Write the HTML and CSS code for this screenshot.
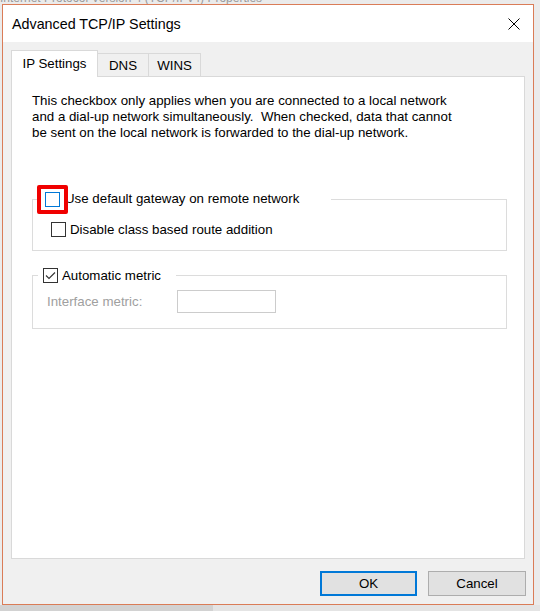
FILE: index.html
```html
<!DOCTYPE html>
<html lang="en">
<head>
  <meta charset="UTF-8" />
  <meta name="viewport" content="width=device-width, initial-scale=1.0"/>
  <title>Advanced TCP/IP Settings</title>
  <link rel="stylesheet" href="styles.css">
</head>
<body>
  <div class="behind"><span>Internet Protocol Version 4 (TCP/IPv4) Properties</span></div>

  <div class="dialog">
    <div class="titlebar">
      <span class="title">Advanced TCP/IP Settings</span>
      <svg class="close" width="12" height="12" viewBox="0 0 12 12">
        <path d="M0.5 0.5 L11.5 11.5 M11.5 0.5 L0.5 11.5" stroke="#000" stroke-width="1" fill="none"/>
      </svg>
    </div>

    <div class="content">
      <div class="tabs">
        <div class="tab active">IP Settings</div>
        <div class="tab tab-dns">DNS</div>
        <div class="tab tab-wins">WINS</div>
      </div>

      <div class="panel">
        <p class="info">This checkbox only applies when you are connected to a local network<br>and a dial-up network simultaneously.&nbsp; When checked, data that cannot<br>be sent on the local network is forwarded to the dial-up network.</p>

        <fieldset class="group group-gateway">
          <legend>
            <span class="opt">
              <span class="check focused"><span class="highlight"></span></span>
              <span>Use default gateway on remote network</span>
            </span>
          </legend>
          <div class="row row-route">
            <span class="opt">
              <span class="check"></span>
              <span>Disable class based route addition</span>
            </span>
          </div>
        </fieldset>

        <fieldset class="group group-metric">
          <legend>
            <span class="opt">
              <span class="check">
                <svg width="13" height="13" viewBox="0 0 13 13">
                  <path d="M2 6.5 L5 9.5 L11 3.5" stroke="#333" stroke-width="1.1" fill="none"/>
                </svg>
              </span>
              <span>Automatic metric</span>
            </span>
          </legend>
          <div class="row row-metric">
            <span class="disabled-label">Interface metric:</span>
            <span class="textbox"></span>
          </div>
        </fieldset>
      </div>

      <div class="buttons">
        <button class="btn btn-default">OK</button>
        <button class="btn">Cancel</button>
      </div>
    </div>
  </div>

  <div class="shadow"></div>
</body>
</html>
```

FILE: styles.css
```css
body {
  margin: 0;
  background: #ebebeb;
  font-family: "Liberation Sans", Arial, sans-serif;
  font-size: 13.3px;
  color: #000;
}

.behind {
  height: 4px;
  overflow: hidden;
  white-space: nowrap;
}

.behind span {
  display: block;
  margin-top: -8px;
  font-size: 12px;
  line-height: 12px;
  color: #9a9a9a;
}

.dialog {
  box-sizing: border-box;
  width: 532px;
  height: 601px;
  margin-left: 2px;
  border: 1px solid #da7c57;
  display: flex;
  flex-direction: column;
  background: #f0f0f0;
}

.titlebar {
  height: 37px;
  background: #fff;
  display: flex;
  align-items: center;
  justify-content: space-between;
  padding: 0 13px 0 9px;
}

.title {
  font-size: 14.3px;
}

.close {
  display: block;
}

.content {
  flex: 1;
  padding: 8px 8px 0 8px;
}

/* tabs */
.tabs {
  display: flex;
  align-items: flex-end;
  height: 26px;
}

.tab {
  box-sizing: border-box;
  height: 23px;
  border-top: 1px solid #d9d9d9;
  border-right: 1px solid #d9d9d9;
  background: #f0f0f0;
  display: flex;
  align-items: center;
  justify-content: center;
}

.tab.active {
  position: relative;
  z-index: 1;
  width: 87px;
  height: 27px;
  margin-bottom: -1px;
  border-left: 1px solid #d9d9d9;
  background: #fff;
  padding-bottom: 1px;
}

.tab-dns {
  width: 51px;
}

.tab-wins {
  width: 52px;
}

.panel {
  box-sizing: border-box;
  height: 483px;
  border: 1px solid #d9d9d9;
  background: #fff;
}

.info {
  margin: 0;
  padding: 16px 0 0 20px;
  line-height: 16px;
}

/* group boxes */
.group {
  box-sizing: border-box;
  width: 475px;
  margin: 0 0 0 20px;
  padding: 0;
  border: 1px solid #dcdcdc;
}

.group legend {
  height: 16px;
  line-height: 16px;
}

.group-gateway {
  margin-top: 50px;
}

.group-gateway legend {
  margin-left: 4px;
  padding: 0 32px 0 8px;
}

.group-metric {
  margin-top: 17px;
}

.group-metric legend {
  margin-left: 5px;
  padding: 0 15px 0 5px;
}

.opt {
  display: inline-flex;
  align-items: center;
  gap: 5px;
  height: 16px;
}

.group-metric .opt {
  gap: 4px;
}

.check {
  position: relative;
  box-sizing: border-box;
  width: 15px;
  height: 15px;
  border: 1px solid #333;
  background: #fff;
  display: flex;
  align-items: center;
  justify-content: center;
}

.check svg {
  display: block;
}

.check.focused {
  border-color: #0078d7;
}

.highlight {
  position: absolute;
  left: -9px;
  top: -8px;
  width: 31px;
  height: 29px;
  box-sizing: border-box;
  border: 4px solid #f00000;
  border-radius: 2px;
}

.row-route {
  padding: 14px 0 10px 18px;
}

.row-route .opt {
  gap: 4px;
}

.row-metric {
  display: flex;
  align-items: center;
  padding: 6px 0 15px 14px;
}

.disabled-label {
  width: 130px;
  color: #a0a0a0;
}

.textbox {
  box-sizing: border-box;
  width: 99px;
  height: 23px;
  border: 1px solid #cccccc;
  background: #fff;
}

/* buttons */
.buttons {
  display: flex;
  justify-content: flex-end;
  gap: 11px;
  margin: 12px -1px 0 0;
}

.btn {
  box-sizing: border-box;
  width: 98px;
  height: 25px;
  border: 1px solid #adadad;
  background: #e1e1e1;
  font-family: "Liberation Sans", Arial, sans-serif;
  font-size: 13.3px;
  color: #000;
  padding: 0;
}

.btn-default {
  width: 97px;
  border: 2px solid #0078d7;
}

.shadow {
  height: 6px;
  background: linear-gradient(to right, #d2d2d2 0, #d2d2d2 213px, #e4e4e4 213px);
}
```
